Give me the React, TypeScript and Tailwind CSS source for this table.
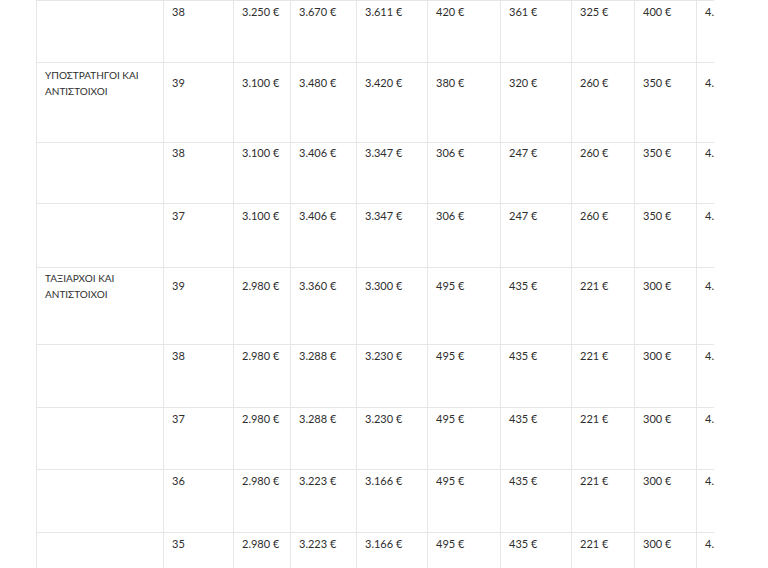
const columns = 'grid grid-cols-[127px_70px_57px_66px_71px_73px_71px_63px_62px_90px]';

type Row = {
  height: string;
  label: string[];
  cells: string[];
};

const rows: Row[] = [
  { height: 'h-[62px]', label: [], cells: ['38', '3.250 €', '3.670 €', '3.611 €', '420 €', '361 €', '325 €', '400 €', '4.'] },
  { height: 'h-[80px]', label: ['ΥΠΟΣΤΡΑΤΗΓΟΙ ΚΑΙ', 'ΑΝΤΙΣΤΟΙΧΟΙ'], cells: ['39', '3.100 €', '3.480 €', '3.420 €', '380 €', '320 €', '260 €', '350 €', '4.'] },
  { height: 'h-[61px]', label: [], cells: ['38', '3.100 €', '3.406 €', '3.347 €', '306 €', '247 €', '260 €', '350 €', '4.'] },
  { height: 'h-[64px]', label: [], cells: ['37', '3.100 €', '3.406 €', '3.347 €', '306 €', '247 €', '260 €', '350 €', '4.'] },
  { height: 'h-[77px]', label: ['ΤΑΞΙΑΡΧΟΙ ΚΑΙ', 'ΑΝΤΙΣΤΟΙΧΟΙ'], cells: ['39', '2.980 €', '3.360 €', '3.300 €', '495 €', '435 €', '221 €', '300 €', '4.'] },
  { height: 'h-[63px]', label: [], cells: ['38', '2.980 €', '3.288 €', '3.230 €', '495 €', '435 €', '221 €', '300 €', '4.'] },
  { height: 'h-[62px]', label: [], cells: ['37', '2.980 €', '3.288 €', '3.230 €', '495 €', '435 €', '221 €', '300 €', '4.'] },
  { height: 'h-[63px]', label: [], cells: ['36', '2.980 €', '3.223 €', '3.166 €', '495 €', '435 €', '221 €', '300 €', '4.'] },
  { height: 'h-[63px]', label: [], cells: ['35', '2.980 €', '3.223 €', '3.166 €', '495 €', '435 €', '221 €', '300 €', '4.'] },
];

// each cell: content block with a big bottom margin, centred in the row
function Cell({ lines, small }: { lines: string[]; small?: boolean }) {
  return (
    <div className="flex items-center border-l border-t border-[#e6e6e6] px-2 whitespace-nowrap">
      <div className={small ? 'pb-[40px] text-[10px]' : 'pb-[40px]'}>
        {lines.length === 0 ? (
          <div className="h-[16px]" />
        ) : (
          lines.map((l, i) => <div key={i}>{l}</div>)
        )}
      </div>
    </div>
  );
}

export default function App() {
  return (
    <div className="w-[768px] h-[568px] bg-white overflow-hidden">
      <div
        className="ml-[36px] w-[678px] overflow-hidden text-[11px] leading-[16px] text-[#2e2e2e]"
        style={{ fontFamily: 'Lato, "Open Sans", sans-serif' }}
      >
        <div className="w-max">
          {rows.map((row, i) => (
            <div key={i} className={`${columns} ${row.height}`}>
              <Cell lines={row.label} small />
              {row.cells.map((c, j) => (
                <Cell key={j} lines={[c]} />
              ))}
            </div>
          ))}
        </div>
      </div>
    </div>
  );
}
